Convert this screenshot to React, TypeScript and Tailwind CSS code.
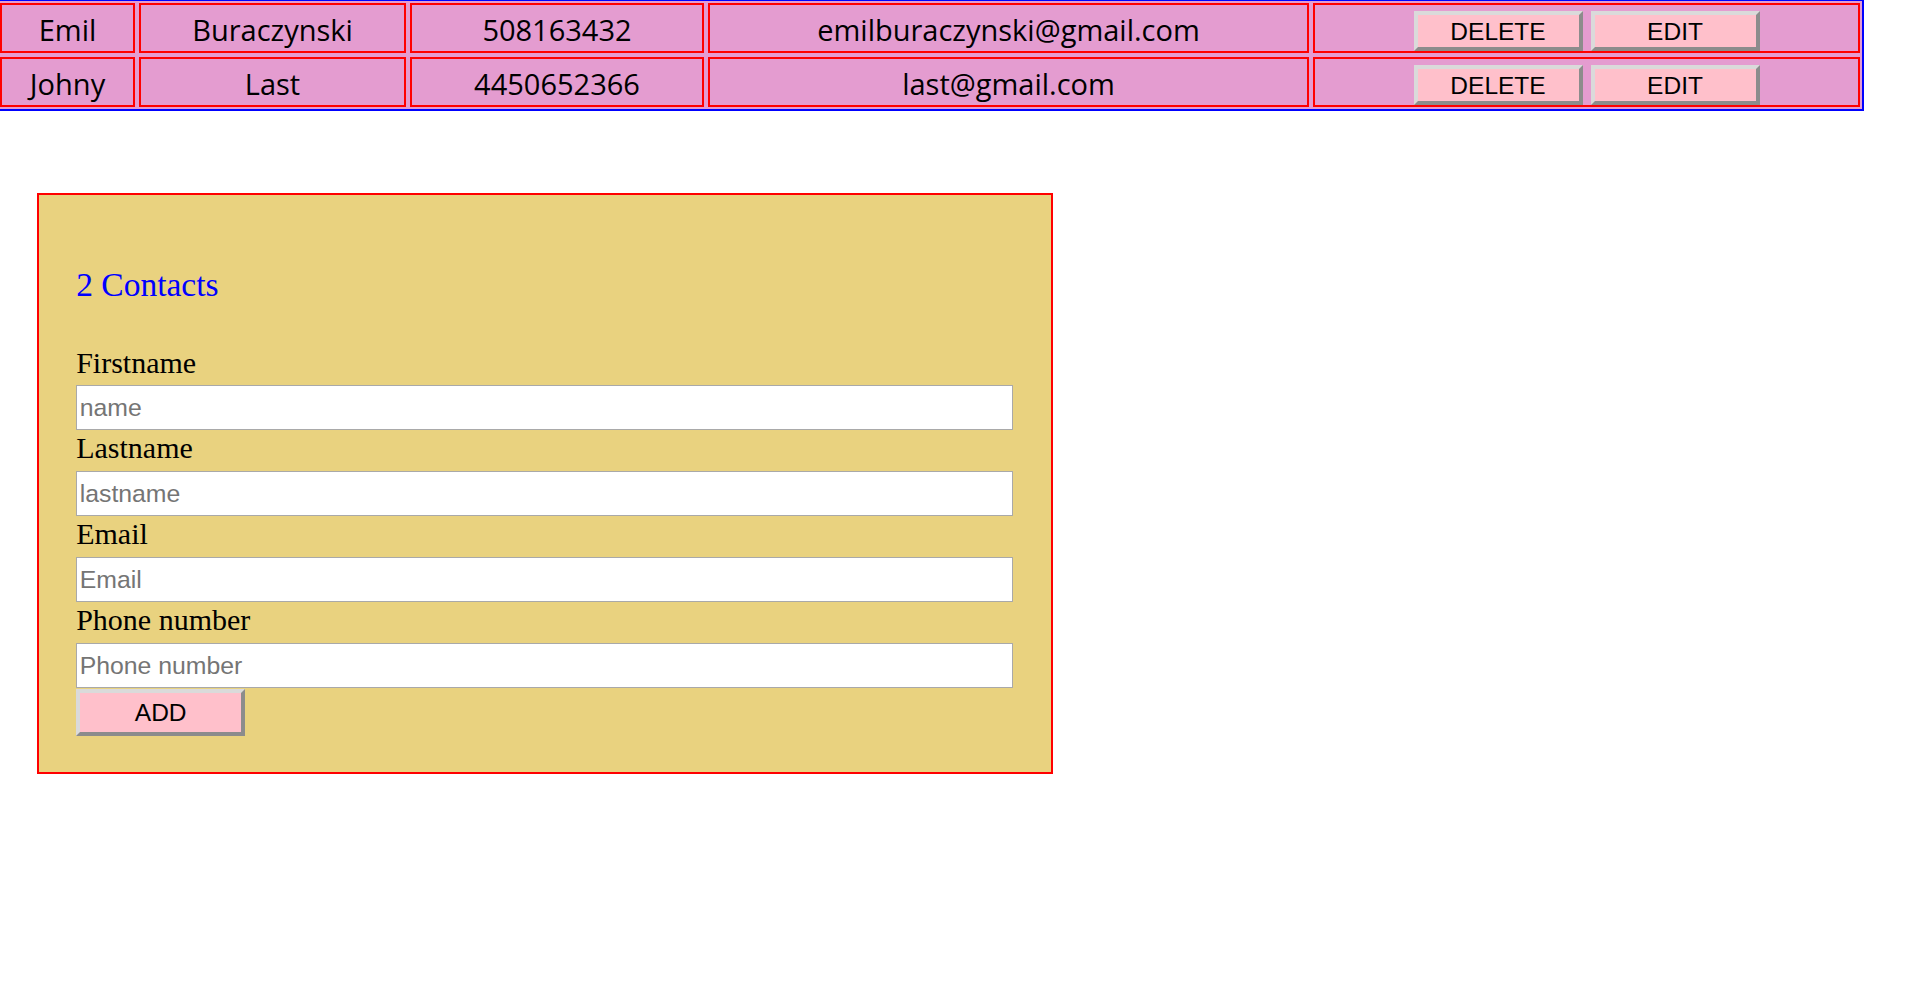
import React from "react";

const contacts = [
  { first: "Emil", last: "Buraczynski", phone: "508163432", email: "emilburaczynski@gmail.com" },
  { first: "Johny", last: "Last", phone: "4450652366", email: "last@gmail.com" },
];

function Cell({ w, children }: { w: string; children: React.ReactNode }) {
  return (
    <div
      className={`${w} h-[50px] border-2 border-[#ff0000] pt-[4px] flex items-center justify-center text-[29px] text-black font-['Comic_Sans_MS','Open_Sans',sans-serif] whitespace-nowrap`}
    >
      {children}
    </div>
  );
}

function RowButton({ label }: { label: string }) {
  return (
    <button className="h-[40px] w-[169px] pt-[2px] bg-[#ffc0cb] border-4 border-t-[#dadada] border-l-[#dadada] border-r-[#8c8c8c] border-b-[#8c8c8c] text-[24.5px] leading-none text-black font-['Liberation_Sans',Arial,sans-serif]">
      {label}
    </button>
  );
}

function Field({ label, placeholder }: { label: string; placeholder: string }) {
  return (
    <div>
      <div className="h-[40.8px] pt-[1px] text-[30px] leading-[34.5px] text-black font-['Liberation_Serif','Times_New_Roman',serif]">
        {label}
      </div>
      <input
        placeholder={placeholder}
        className="block w-full h-[45px] border border-[#a9a9a9] bg-white px-[2.5px] pt-[1px] text-[24.8px] text-black font-['Liberation_Sans',Arial,sans-serif] placeholder:text-[#757575] outline-none"
      />
    </div>
  );
}

export default function App() {
  return (
    <div className="min-h-[991px] bg-white">
      <div className="-mt-[1px] -ml-[4px] w-[1868px] border-2 border-[#0000ff] bg-[#e49cd0] p-[2px] flex flex-col gap-[4px]">
        {contacts.map((c) => (
          <div key={c.email} className="flex gap-[4px]">
            <Cell w="w-[135px]">{c.first}</Cell>
            <Cell w="w-[267px]">{c.last}</Cell>
            <Cell w="w-[294px]">{c.phone}</Cell>
            <Cell w="w-[601px]">{c.email}</Cell>
            <div className="w-[547px] h-[50px] border-2 border-[#ff0000] flex items-start justify-center gap-[8px] pt-[6px]">
              <RowButton label="DELETE" />
              <RowButton label="EDIT" />
            </div>
          </div>
        ))}
      </div>

      <div className="mt-[82.3px] ml-[36.7px] w-[1016.3px] border-2 border-[#ff0000] bg-[#e9d27f] p-[37.5px] pb-[36.5px]">
        <h2 className="mt-[33.6px] mb-[39.8px] text-[33.5px] leading-[38.5px] text-[#0000ff] font-['Liberation_Serif','Times_New_Roman',serif]">
          2 Contacts
        </h2>
        <Field label="Firstname" placeholder="name" />
        <Field label="Lastname" placeholder="lastname" />
        <Field label="Email" placeholder="Email" />
        <Field label="Phone number" placeholder="Phone number" />
        <button className="block mt-[1px] h-[47px] w-[169px] pt-[1px] bg-[#ffc0cb] border-4 border-t-[#dadada] border-l-[#dadada] border-r-[#8c8c8c] border-b-[#8c8c8c] text-[24.5px] leading-none text-black font-['Liberation_Sans',Arial,sans-serif]">
          ADD
        </button>
      </div>
    </div>
  );
}
